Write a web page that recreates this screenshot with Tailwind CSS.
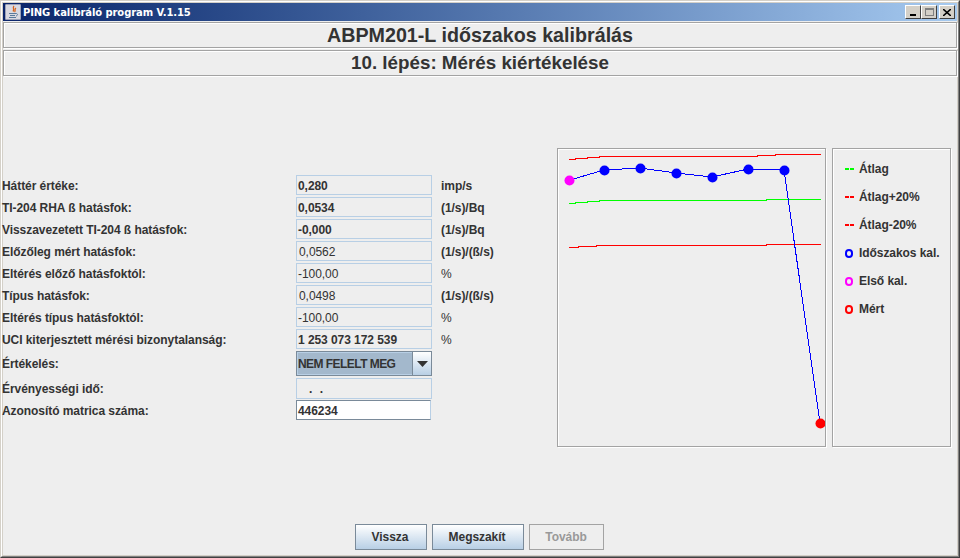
<!DOCTYPE html>
<html lang="hu">
<head>
  <meta charset="UTF-8">
  <title>PING kalibráló program</title>
  <script src="https://cdn.jsdelivr.net/npm/@tailwindcss/browser@4"></script>
</head>
<body class="bg-[#eeeeee] overflow-hidden">
  <div class="w-[960px] h-[558px] flex flex-col border-t border-l border-t-[#d4d0c8] border-l-[#d4d0c8] border-r border-b border-r-[#404040] border-b-[#404040] font-['Liberation_Sans',sans-serif] text-[12px] font-bold tracking-[-0.06px] text-[#333333]">
    <div class="flex-1 flex flex-col min-h-0 border-t border-l border-t-white border-l-white border-r border-b border-r-[#808080] border-b-[#808080]">
      <div class="flex-1 flex flex-col min-h-0 border border-[#d4d0c8]">

        <!-- title bar -->
        <div class="h-[18px] shrink-0 flex items-center pl-[2px] pr-[2px] bg-gradient-to-r from-[#0a246a] to-[#a6caf0]">
          <div class="w-[16px] h-[16px] bg-[#d9d9e2] border border-[#9aa0b8] rounded-[1px] flex items-center justify-center">
            <svg width="12" height="14" viewBox="0 0 12 14">
              <path d="M7 1C5 3 8 4 6 6.500M9 3C7 4 9 6 7.500 7" stroke="#d8641e" stroke-width="1.300" fill="none"/>
              <path d="M2 8.500h7M3 10.500h5M2 12.500h7" stroke="#5a7a9c" stroke-width="1"/>
              <path d="M9 8.500c2 0 2 2 0 2.500" stroke="#5a7a9c" stroke-width="1" fill="none"/>
            </svg>
          </div>
          <span class="ml-[2px] text-white text-[10px] font-bold tracking-[-0.1px] font-['DejaVu_Sans',sans-serif]">PING kalibráló program V.1.15</span>
          <div class="ml-auto flex items-center">
            <div class="w-[16px] h-[14px] bg-[#d4d0c8] border-t border-l border-white border-r border-b border-r-[#404040] border-b-[#404040] relative">
              <div class="absolute left-[4px] bottom-[2px] w-[6px] h-[2px] bg-black"></div>
            </div>
            <div class="w-[16px] h-[14px] bg-[#d4d0c8] border-t border-l border-white border-r border-b border-r-[#404040] border-b-[#404040] flex items-center justify-center">
              <div class="w-[9px] h-[8px] border border-[#808080] border-t-2"></div>
            </div>
            <div class="ml-[2px] w-[16px] h-[14px] bg-[#d4d0c8] border-t border-l border-white border-r border-b border-r-[#404040] border-b-[#404040] flex items-center justify-center">
              <svg width="8" height="7" viewBox="0 0 8 7"><path d="M0 0L8 7M8 0L0 7" stroke="#000" stroke-width="1.600"/></svg>
            </div>
          </div>
        </div>

        <!-- headings -->
        <div class="h-[26px] shrink-0 flex items-center justify-center pt-[2px] text-[19.7px] tracking-normal border border-[#a3a3a3] shadow-[inset_1px_1px_0_#fff,1px_1px_0_#fff] mt-[1px]">ABPM201-L időszakos kalibrálás</div>
        <div class="h-[26px] shrink-0 flex items-center justify-center text-[18.8px] tracking-normal border border-[#a3a3a3] shadow-[inset_1px_1px_0_#fff,1px_1px_0_#fff] mt-[2px]">10. lépés: Mérés kiértékelése</div>

        <!-- main -->
        <div class="flex-1 flex min-h-0">
          <!-- form -->
          <div class="w-[554px] shrink-0 pt-[99px] flex flex-col gap-[2px]">
            <div class="flex items-center h-[20px]"><span class="w-[294px] -ml-[1px] pt-[1px]">Háttér értéke:</span><span class="w-[136px] h-[20px] flex items-center pl-[1px] pt-[1px] border border-[#b8cfe5]">0,280</span><span class="ml-[9px] pt-[1px]">imp/s</span></div>
            <div class="flex items-center h-[20px]"><span class="w-[294px] -ml-[1px] pt-[1px]">TI-204 RHA ß hatásfok:</span><span class="w-[136px] h-[20px] flex items-center pl-[1px] pt-[1px] border border-[#b8cfe5]">0,0534</span><span class="ml-[9px] pt-[1px]">(1/s)/Bq</span></div>
            <div class="flex items-center h-[20px]"><span class="w-[294px] -ml-[1px] pt-[1px]">Visszavezetett TI-204 ß hatásfok:</span><span class="w-[136px] h-[20px] flex items-center pl-[1px] pt-[1px] border border-[#b8cfe5]">-0,000</span><span class="ml-[9px] pt-[1px]">(1/s)/Bq</span></div>
            <div class="flex items-center h-[20px]"><span class="w-[294px] -ml-[1px] pt-[1px]">Előzőleg mért hatásfok:</span><span class="w-[136px] h-[20px] flex items-center pl-[2px] pt-[1px] border border-[#b8cfe5] font-normal">0,0562</span><span class="ml-[9px] pt-[1px]">(1/s)/(ß/s)</span></div>
            <div class="flex items-center h-[20px]"><span class="w-[294px] -ml-[1px] pt-[1px]">Eltérés előző hatásfoktól:</span><span class="w-[136px] h-[20px] flex items-center pl-[1px] pt-[1px] border border-[#b8cfe5] font-normal">-100,00</span><span class="ml-[9px] pt-[1px] font-normal">%</span></div>
            <div class="flex items-center h-[20px]"><span class="w-[294px] -ml-[1px] pt-[1px]">Típus hatásfok:</span><span class="w-[136px] h-[20px] flex items-center pl-[2px] pt-[1px] border border-[#b8cfe5] font-normal">0,0498</span><span class="ml-[9px] pt-[1px]">(1/s)/(ß/s)</span></div>
            <div class="flex items-center h-[20px]"><span class="w-[294px] -ml-[1px] pt-[1px]">Eltérés típus hatásfoktól:</span><span class="w-[136px] h-[20px] flex items-center pl-[1px] pt-[1px] border border-[#b8cfe5] font-normal">-100,00</span><span class="ml-[9px] pt-[1px] font-normal">%</span></div>
            <div class="flex items-center h-[20px]"><span class="w-[294px] -ml-[1px] pt-[1px]">UCI kiterjesztett mérési bizonytalanság:</span><span class="w-[136px] h-[20px] flex items-center pl-[1px] pt-[1px] border border-[#b8cfe5]">1 253 073 172 539</span><span class="ml-[9px] pt-[1px] font-normal">%</span></div>
            <div class="flex items-center h-[25px]"><span class="w-[294px] -ml-[1px] pt-[1px]">Értékelés:</span>
              <div class="w-[136px] h-[25px] flex border border-[#7a8a99]">
                <div class="flex-1 flex items-center bg-[#a3b8cc] border border-[#b8cfe5] border-r-0 tracking-[-0.55px]">NEM FELELT MEG</div>
                <div class="w-[19px] flex items-center justify-center border-l border-[#7a8a99] bg-gradient-to-b from-white to-[#b8cfe5]">
                  <svg width="11" height="6" viewBox="0 0 11 6"><path d="M0 0H11L5.500 6Z" fill="#333"/></svg>
                </div>
              </div>
            </div>
            <div class="flex items-center h-[20px]"><span class="w-[294px] -ml-[1px] pt-[1px]">Érvényességi idő:</span><span class="w-[136px] h-[21px] flex items-center pl-[12px] pt-[1px] border border-[#b8cfe5] tracking-[2px]">. .</span></div>
            <div class="flex items-center h-[20px]"><span class="w-[294px] -ml-[1px] pt-[1px]">Azonosító matrica száma:</span><span class="w-[135px] h-[20px] flex items-center pl-[1px] pt-[1px] bg-white border border-[#7a8a99] border-r-[#b8cfe5]">446234</span></div>
          </div>

          <!-- chart -->
          <div class="mt-[72px] w-[269px] h-[299px] shrink-0 border border-[#a3a3a3] shadow-[inset_1px_1px_0_#fff,1px_1px_0_#fff]">
            <svg width="267" height="297" viewBox="558 149 267 297" shape-rendering="crispEdges" fill="none">
              <polyline points="569,159 575,159 575,158 587,158 587,157 599,157 599,156 757,156 757,155 775,155 775,154 821,154" stroke="#ff0000"/>
              <polyline points="569,203 575,203 575,202 587,202 587,201 599,201 599,200 766,200 766,199 821,199" stroke="#00ff00"/>
              <polyline points="569,247 578,247 578,246 596,246 596,245 766,245 766,244 821,244" stroke="#ff0000"/>
              <polyline points="570,180 604,170 640,168 676,173 712,177 748,169 784,170 820,423" stroke="#0000ff"/>
              <g shape-rendering="auto">
                <circle cx="569.500" cy="180.500" r="5" fill="#ff00ff"/>
                <circle cx="604.500" cy="170.500" r="5" fill="#0000ff"/>
                <circle cx="640.500" cy="168.500" r="5" fill="#0000ff"/>
                <circle cx="676.500" cy="173.500" r="5" fill="#0000ff"/>
                <circle cx="712.500" cy="177.500" r="5" fill="#0000ff"/>
                <circle cx="748.500" cy="169.500" r="5" fill="#0000ff"/>
                <circle cx="784.500" cy="170.500" r="5" fill="#0000ff"/>
                <circle cx="820.500" cy="423.500" r="5" fill="#ff0000"/>
              </g>
            </svg>
          </div>

          <!-- legend -->
          <div class="ml-[6px] mt-[72px] w-[119px] h-[299px] shrink-0 border border-[#a3a3a3] shadow-[inset_1px_1px_0_#fff,1px_1px_0_#fff] pt-[10px] pl-[12px] flex flex-col gap-[8px]">
            <div class="flex items-center h-[20px]"><span class="w-[4px] h-[2px] bg-[#00ff00]"></span><span class="ml-[1px] w-[4px] h-[2px] bg-[#00ff00]"></span><span class="ml-[5px]">Átlag</span></div>
            <div class="flex items-center h-[20px]"><span class="w-[4px] h-[2px] bg-[#ff0000]"></span><span class="ml-[1px] w-[4px] h-[2px] bg-[#ff0000]"></span><span class="ml-[5px]">Átlag+20%</span></div>
            <div class="flex items-center h-[20px]"><span class="w-[4px] h-[2px] bg-[#ff0000]"></span><span class="ml-[1px] w-[4px] h-[2px] bg-[#ff0000]"></span><span class="ml-[5px]">Átlag-20%</span></div>
            <div class="flex items-center h-[20px]"><span class="w-[8px] h-[9px] rounded-full border-2 border-[#0000ff]"></span><span class="ml-[6px]">Időszakos kal.</span></div>
            <div class="flex items-center h-[20px]"><span class="w-[8px] h-[9px] rounded-full border-2 border-[#ff00ff]"></span><span class="ml-[6px]">Első kal.</span></div>
            <div class="flex items-center h-[20px]"><span class="w-[8px] h-[9px] rounded-full border-2 border-[#ff0000]"></span><span class="ml-[6px]">Mért</span></div>
          </div>
        </div>

        <!-- buttons -->
        <div class="shrink-0 flex justify-center gap-[5px] pb-[5px] pr-[1px]">
          <button class="w-[72px] h-[26px] pr-[2px] border border-[#7a8a99] bg-gradient-to-b from-white to-[#b8cfe5] font-bold">Vissza</button>
          <button class="w-[92px] h-[26px] pr-[2px] border border-[#7a8a99] bg-gradient-to-b from-white to-[#b8cfe5] font-bold">Megszakít</button>
          <button class="w-[75px] h-[26px] pr-[1px] border border-[#a3a3a3] text-[#999999] font-bold" disabled>Tovább</button>
        </div>
      </div>
    </div>
  </div>
</body>
</html>
